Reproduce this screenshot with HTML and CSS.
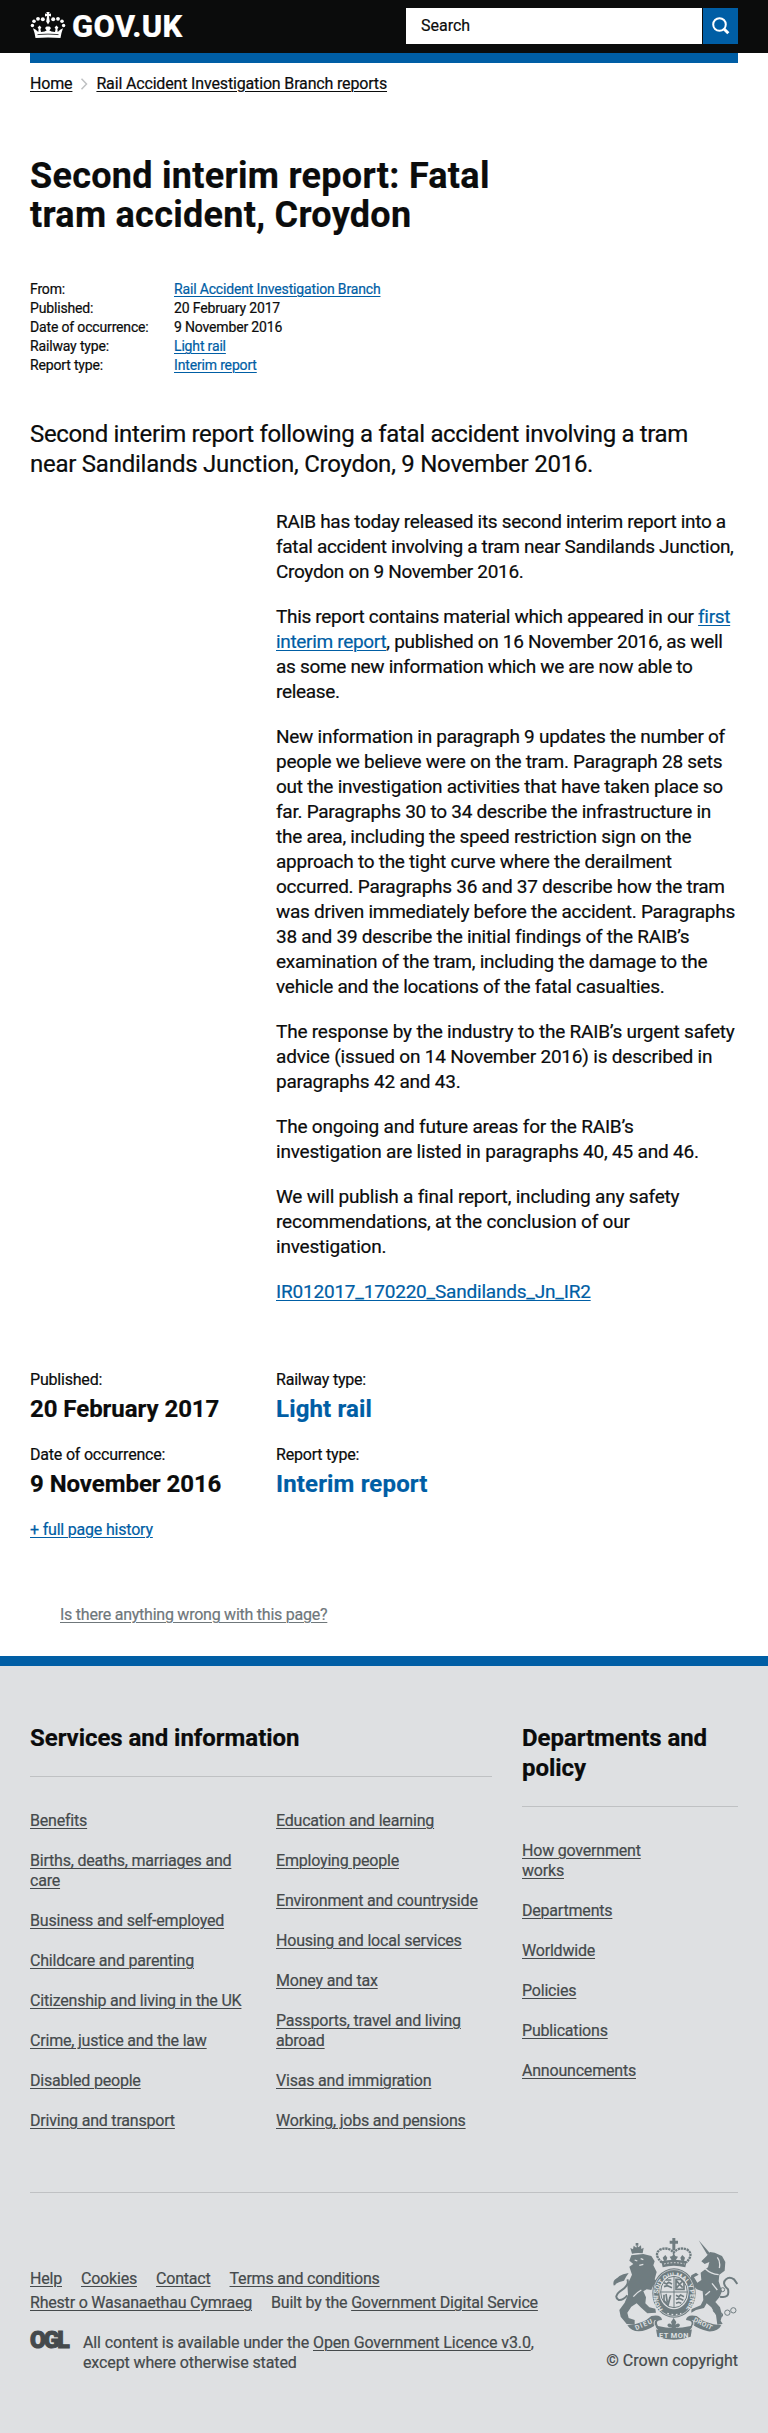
FILE: index.html
```html
<!DOCTYPE html>
<html lang="en">
<head>
<meta charset="utf-8">
<title>Second interim report: Fatal tram accident, Croydon - GOV.UK</title>
<link rel="stylesheet" href="styles.css">
</head>
<body>
<header class="top">
  <div class="top-inner">
    <a class="brand" href="#">
      <svg class="crown" viewBox="0 0 36 27" width="36" height="27">
        <g fill="#fff">
          <path d="M5.500 26 Q4.500 20 3 16.300 L5.500 17.600 L8.300 20 L8.600 17 L7.600 15.600 L9.600 13.500 L11.400 15.600 L10.400 17 L11 20 L14.500 19.500 L16.600 18.500 L15 16 L16.500 14.500 H19.500 L21 16 L19.400 18.500 L21.500 19.500 L25 20 L25.600 17 L24.600 15.600 L26.400 13.500 L28.400 15.600 L27.400 17 L27.700 20 L30.500 17.600 L33 16.300 Q31.500 20 30.500 26 Q18 24.800 5.500 26Z"/>
          <circle cx="2.400" cy="13.500" r="1.700"/><circle cx="4" cy="9.200" r="1.800"/><circle cx="8" cy="6.800" r="1.900"/><circle cx="12.800" cy="7.200" r="2"/>
          <circle cx="23.200" cy="7.200" r="2"/><circle cx="28" cy="6.800" r="1.900"/><circle cx="32" cy="9.200" r="1.800"/><circle cx="33.600" cy="13.500" r="1.700"/>
          <path d="M16.300 0h3.400l-.8 2 2.100-.5v3l-2.100-.5.9 5.500-1.800 3-1.800-3 .9-5.500-2.100.5v-3l2.100.5z"/>
        </g>
        <path d="M7.500 22.600Q18 21.600 28.500 22.600" fill="none" stroke="#0b0c0c" stroke-width=".8"/>
      </svg>
      <span class="brand-name">GOV.UK</span>
    </a>
    <div class="search">
      <div class="search-field">Search</div>
      <div class="search-button"><svg width="18" height="18" viewBox="0 0 18 18"><circle cx="7.500" cy="7.500" r="6.300" fill="none" stroke="#fff" stroke-width="2"/><path d="M11.800 11.800L16.300 16.300" stroke="#fff" stroke-width="3"/></svg></div>
    </div>
  </div>
</header>
<main class="page">
  <div class="bar"></div>
  <nav class="crumbs">
    <a href="#">Home</a>
    <svg width="8" height="12" viewBox="0 0 8 12"><path d="M1.500 .8L6.500 6L1.500 11.200" fill="none" stroke="#bfc1c3" stroke-width="1.500"/></svg>
    <a href="#">Rail Accident Investigation Branch reports</a>
  </nav>
  <h1 class="title">Second interim report: Fatal<br>tram accident, Croydon</h1>
  <dl class="meta">
    <dt>From:</dt><dd><a href="#">Rail Accident Investigation Branch</a></dd>
    <dt>Published:</dt><dd>20 February 2017</dd>
    <dt>Date of occurrence:</dt><dd>9 November 2016</dd>
    <dt>Railway type:</dt><dd><a href="#">Light rail</a></dd>
    <dt>Report type:</dt><dd><a href="#">Interim report</a></dd>
  </dl>
  <p class="lead">Second interim report following a fatal accident involving a tram<br><span class="lead-end">near Sandilands Junction, Croydon, 9 November 2016.</span></p>
  <article class="body">
    <p class="tight">RAIB has today released its second interim report into a<br>fatal accident involving a tram near Sandilands Junction,<br>Croydon on 9 November 2016.</p>
    <p class="tight">This report contains material which appeared in our <a href="#">first<br>interim report</a>, published on 16 November 2016, as well<br>as some new information which we are now able to<br>release.</p>
    <p>New information in paragraph 9 updates the number of<br>people we believe were on the tram. Paragraph 28 sets<br>out the investigation activities that have taken place so<br>far. Paragraphs 30 to 34 describe the infrastructure in<br>the area, including the speed restriction sign on the<br>approach to the tight curve where the derailment<br>occurred. Paragraphs 36 and 37 describe how the tram<br>was driven immediately before the accident. Paragraphs<br>38 and 39 describe the initial findings of the RAIB’s<br>examination of the tram, including the damage to the<br>vehicle and the locations of the fatal casualties.</p>
    <p class="loose">The response by the industry to the RAIB’s urgent safety<br>advice (issued on 14 November 2016) is described in<br>paragraphs 42 and 43.</p>
    <p class="loose">The ongoing and future areas for the RAIB’s<br>investigation are listed in paragraphs 40, 45 and 46.</p>
    <p class="loose">We will publish a final report, including any safety<br>recommendations, at the conclusion of our<br>investigation.</p>
    <p class="loose"><a href="#">IR012017_170220_Sandilands_Jn_IR2</a></p>
  </article>
  <dl class="facts">
    <div><dt>Published:</dt><dd>20 February 2017</dd></div>
    <div><dt>Railway type:</dt><dd class="blue">Light rail</dd></div>
    <div><dt>Date of occurrence:</dt><dd>9 November 2016</dd></div>
    <div><dt>Report type:</dt><dd class="blue">Interim report</dd></div>
  </dl>
  <p class="history"><a href="#">+ full page history</a></p>
  <p class="feedback"><a href="#">Is there anything wrong with this page?</a></p>
</main>
<footer class="footer">
  <div class="categories">
    <section>
      <h2>Services and information</h2>
      <div class="two">
        <ul>
          <li><a href="#">Benefits</a></li><li><a href="#">Births, deaths, marriages and<br>care</a></li><li><a href="#">Business and self-employed</a></li><li><a href="#">Childcare and parenting</a></li><li><a href="#">Citizenship and living in the UK</a></li><li><a href="#">Crime, justice and the law</a></li><li><a href="#">Disabled people</a></li><li><a href="#">Driving and transport</a></li>
        </ul>
        <ul>
          <li><a href="#">Education and learning</a></li><li><a href="#">Employing people</a></li><li><a href="#">Environment and countryside</a></li><li><a href="#">Housing and local services</a></li><li><a href="#">Money and tax</a></li><li><a href="#">Passports, travel and living<br>abroad</a></li><li><a href="#">Visas and immigration</a></li><li><a href="#">Working, jobs and pensions</a></li>
        </ul>
      </div>
    </section>
    <section>
      <h2>Departments and<br>policy</h2>
      <ul>
        <li><a href="#">How government<br>works</a></li><li><a href="#">Departments</a></li><li><a href="#">Worldwide</a></li><li><a href="#">Policies</a></li><li><a href="#">Publications</a></li><li><a href="#">Announcements</a></li>
      </ul>
    </section>
  </div>
  <div class="legal">
    <div class="legal-text">
      <div class="links"><a href="#">Help</a><a href="#">Cookies</a><a href="#">Contact</a><a href="#">Terms and conditions</a></div>
      <div class="links"><a href="#">Rhestr o Wasanaethau Cymraeg</a><span>Built by the <a href="#">Government Digital Service</a></span></div>
      <div class="licence">
        <span class="ogl">OGL</span>
        <p>All content is available under the <a href="#">Open Government Licence v3.0</a>,<br>except where otherwise stated</p>
      </div>
    </div>
    <div class="copyright">
      <svg class="crest" width="125" height="103" viewBox="69 51 375 309">
        <!-- lion -->
        <g class="solid">
          <path d="M126 101L121 84l8 4 2-11 8 6 2-8 4 7 8-6 1 11 7-4-3 17Q142 97 126 101Z"/>
          <path d="M137 69h8v8h-8z"/>
          <path d="M124 106L160 102L184 108L194 124L190 136L200 156L194 178L210 190L206 206L190 196L184 210L170 208L160 214L168 232L166 250L178 262L196 266L198 278L172 280L152 262L140 250L124 260L112 278L116 294L134 300L134 314L110 312L92 290L88 270L104 248L114 224L112 194L126 164L118 140L130 132L118 122Z"/>
          <path d="M72 188Q80 164 116 159Q108 170 102 182Q90 184 72 194Z"/>
        </g>
        <path class="line" stroke-width="6" d="M74 196Q70 182 84 178M112 178Q120 196 90 214Q70 230 86 240Q98 242 112 226"/>
        <path class="light" stroke-width="4" d="M134 120l8 3M152 116l8 3M148 136l12-3M154 210Q142 216 130 230"/>
        <!-- unicorn -->
        <g class="solid">
          <path d="M326 61L360 100L352 104Z"/>
          <path d="M360 96L374 98L396 108L406 126L404 152L388 164L386 184L396 214L388 232L376 246L390 262L396 286L392 302L398 312L382 314L378 286L364 262L350 250L342 264L318 270L304 278L304 268L332 256L340 240L338 214L320 208L300 184L304 166L318 158L326 164L312 172L322 188L334 180L332 158L354 142L358 126L344 132L334 124L350 108Z"/>
        </g>
        <path class="light" stroke-width="4" d="M346 146Q362 162 386 164M382 112Q392 124 388 144M366 190l16 20M346 226l14-12"/>
        <path class="line" stroke-width="6" d="M390 230Q420 236 414 208Q394 190 408 178Q418 168 432 178L442 192"/>
        <g class="line" stroke-width="3"><circle cx="398" cy="209" r="6"/><circle cx="376" cy="271" r="6"/><circle cx="392" cy="285" r="6"/><circle cx="412" cy="278" r="8"/><circle cx="430" cy="271" r="8"/></g>
        <!-- royal crown -->
        <path class="line" stroke-width="7" stroke-dasharray="7 2" d="M216 128Q188 102 212 88Q236 80 251 98Q266 80 290 88Q314 102 288 128"/>
        <g class="solid">
          <path d="M247 54h9v8h8v9h-8v20h-9V71h-8v-9h8z"/>
          <path d="M214 124Q251 114 290 124L286 142Q251 132 218 142Z"/>
          <path d="M246 122l-7-12 8-2 4-10 5 10 8 2-8 12zM222 123l-4-10 8-8 6 8-3 9zM274 122l-3-9 6-8 8 8-3 10z"/>
        </g>
        <path class="light" stroke-width="3" stroke-dasharray="5 5" d="M222 132Q251 124 284 132"/>
        <!-- garter and shield -->
        <ellipse class="solid" cx="252" cy="219" rx="65" ry="74"/>
        <ellipse class="light" stroke-width="2" cx="252" cy="219" rx="61" ry="70"/>
        <ellipse cx="252" cy="216" rx="44" ry="52" fill="#dee0e2"/>
        <path id="garter" d="M219 268A48 56 0 1 1 286 268" fill="none"/>
        <text class="motto" font-size="20"><textPath href="#garter" textLength="248">HONI SOIT QUI MAL Y PENSE</textPath></text>
        <ellipse class="line" stroke-width="3" cx="252" cy="216" rx="40" ry="47"/>
        <path class="line" stroke-width="3" d="M252 169V263M212 216H292"/>
        <path class="line" stroke-width="5" d="M222 188l8 4 6-5 10 5M222 200l10-3 14 6M228 180h16M258 181l20 22M278 183l-18 20M258 178h14l10 10v20h-24zM222 224v18l12 14 8-30M228 222l4 26M240 232l-6 22M258 226l8 4 6-5 10 5M258 238l10-3 12 6M258 250l8-3 8 3"/>
        <path class="light" stroke-width="4" stroke-dasharray="5 8" d="M232 280Q252 288 274 280"/>
        <!-- motto ribbon -->
        <path class="solid" d="M112 316Q160 312 184 288Q214 282 216 300Q194 300 204 318Q251 330 302 318Q312 302 288 300Q290 282 320 288Q344 312 394 316Q384 336 354 334Q326 326 308 314L302 350Q251 368 202 350L196 316Q168 334 146 334Q124 334 112 316Z"/>
        <path class="light" stroke-width="3" d="M196 300Q186 310 202 330M308 300Q318 310 302 330"/>
        <path class="solid" d="M251 294l8 12-3 8q12-8 14 2-2 8-12 6l-3 10h-8l-3-10q-10 2-12-6 2-10 14-2l-3-8z"/>
        <text class="motto" x="207" y="353" font-size="22" textLength="88">ET MON</text>
        <text class="motto" x="0" y="0" font-size="20" textLength="54" transform="translate(139 331) rotate(-24)">DIEU</text>
        <text class="motto" x="0" y="0" font-size="20" textLength="60" transform="translate(309 304) rotate(26)">DROIT</text>
      </svg>
      <div>© Crown copyright</div>
    </div>
  </div>
</footer>
</body>
</html>
```
FILE: styles.css
```css
* { box-sizing: border-box; margin: 0; padding: 0; }
body { font-family: Roboto, "Liberation Sans", sans-serif; font-size: 16px; line-height: 20px; letter-spacing: -.2px; color: #0b0c0c; background: #fff; white-space: nowrap; -webkit-text-stroke: .2px; }
a { color: #005ea5; text-underline-offset: 2px; text-decoration-thickness: 1px; }
ul { list-style: none; }
svg { display: block; }
.top { height: 53px; background: #0b0c0c; }
.top-inner { display: flex; justify-content: space-between; padding: 8px 30px 0; }
.brand { display: flex; color: #fff; text-decoration: none; gap: 6px; padding-top: 4px; }
.brand-name { font-size: 31px; font-weight: 800; line-height: 29px; letter-spacing: .3px; }
.search { display: flex; gap: 1px; }
.search-field { width: 296px; height: 36px; background: #fff; padding: 0 15px; line-height: 36px; letter-spacing: 0; }
.search-button { width: 35px; height: 36px; background: #005ea5; display: flex; align-items: center; justify-content: center; }
.page { padding: 0 30px; height: 1603px; }
.bar { height: 10px; background: #005ea5; }
.crumbs { display: flex; align-items: center; gap: 8px; padding-top: 11px; height: 31px; letter-spacing: -.16px; }
.crumbs a { color: #0b0c0c; }
.title { font-size: 36px; line-height: 39px; font-weight: 700; letter-spacing: .28px; margin-top: 63px; }
.meta { display: grid; grid-template-columns: 144px 1fr; font-size: 14px; line-height: 19px; letter-spacing: -.16px; margin-top: 45px; }
.lead { font-size: 24px; line-height: 30px; letter-spacing: -.34px; margin-top: 44px; }
.lead-end { letter-spacing: -.25px; }
.body { padding: 30px 0 0 246px; font-size: 19px; line-height: 25px; letter-spacing: -.26px; }
.body .tight { letter-spacing: -.32px; }
.body .loose { letter-spacing: -.2px; }
.body p { margin-bottom: 20px; }
.facts { display: grid; grid-template-columns: 246px 1fr; row-gap: 21px; margin-top: 66px; }
.facts dd { font-size: 24px; line-height: 30px; font-weight: 700; letter-spacing: -.05px; padding-top: 4px; }
.facts .blue { color: #005ea5; letter-spacing: .15px; }
.history { margin-top: 21px; }
.feedback { padding: 65px 0 0 30px; letter-spacing: -.24px; }
.feedback a { color: #6f777b; }
.footer { height: 777px; border-top: 10px solid #005ea5; background: #dee0e2; padding: 57px 30px 0; color: #454a4c; }
.footer a { color: #454a4c; }
.categories { display: grid; grid-template-columns: 462px 216px; gap: 30px; height: 470px; border-bottom: 1px solid #bfc1c3; }
.categories h2 { font-size: 24px; line-height: 30px; letter-spacing: -.05px; color: #0b0c0c; padding-bottom: 23px; border-bottom: 1px solid #bfc1c3; margin-bottom: 34px; }
.two { display: grid; grid-template-columns: 246px 1fr; }
.categories li { margin-bottom: 20px; }
.legal { display: flex; justify-content: space-between; padding-top: 44px; }
.legal-text { padding-top: 32px; }
.links { display: flex; gap: 19px; height: 24px; }
.licence { display: flex; margin-top: 16px; letter-spacing: -.12px; }
.ogl { width: 53px; font-size: 23px; line-height: 16px; font-weight: 900; letter-spacing: -2.200px; -webkit-text-stroke: 1px #454a4c; }
.copyright { display: flex; flex-direction: column; align-items: flex-end; gap: 11px; letter-spacing: -.05px; }
.crest { -webkit-text-stroke: 0; }
.solid { fill: #6f7c80; }
.line { fill: none; stroke: #6f7c80; }
.light { fill: none; stroke: #dee0e2; }
.motto { fill: #dee0e2; font-weight: 700; letter-spacing: 0; }
```
